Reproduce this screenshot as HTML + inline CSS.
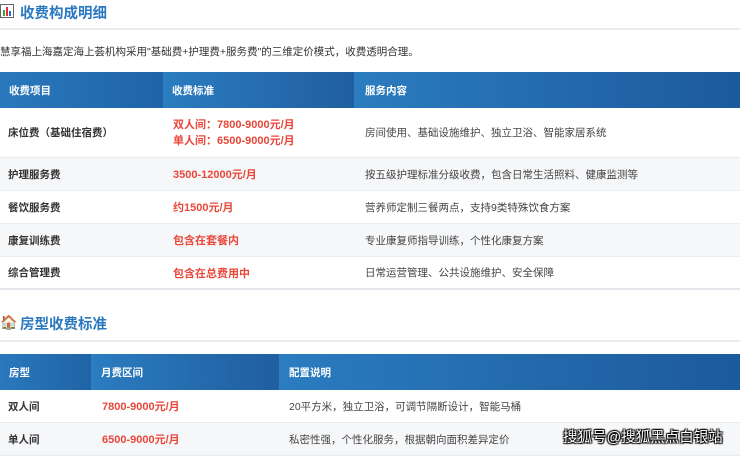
<!DOCTYPE html><html><head><meta charset="utf-8"><style>
*{margin:0;padding:0;box-sizing:border-box}
body{width:740px;height:452px;overflow:hidden;background:#fff;font-family:"Liberation Sans","Noto Sans CJK SC",sans-serif;position:relative;color:#333}
.a{position:absolute;white-space:nowrap}
.h2{font-size:14.5px;font-weight:bold;color:#2a78bf}
.hr{position:absolute;left:0;width:740px;height:2px;background:#e8ebef}
.hd{position:absolute;background:linear-gradient(90deg,#2a7abf,#1d5c9e);}
.hc{position:absolute;top:0;height:100%;color:#fff;font-weight:bold;font-size:10.5px;display:flex;align-items:center;padding-left:9px}
.row{position:absolute;left:0;width:740px;border-bottom:1px solid #e9ecf0;font-size:10.5px}
.row div{position:absolute;top:0;height:100%;display:flex;align-items:center}
.b{font-weight:bold;color:#333}
.r{font-weight:bold;color:#e8473a;font-size:11px}
.n{color:#444}
</style></head><body>
<div class="a" style="left:0;top:4px;width:14px;height:14px;border:1px solid #666;background:#fff">
 <div class="a" style="left:2px;bottom:1px;width:2px;height:6px;background:#3a3"></div>
 <div class="a" style="left:5px;bottom:1px;width:2px;height:9px;background:#d33"></div>
 <div class="a" style="left:8px;bottom:1px;width:2px;height:5px;background:#36c"></div>
</div>
<div class="a h2" style="left:20px;top:2px">收费构成明细</div>
<div class="hr" style="top:28px"></div>
<div class="a" style="left:0;top:44px;font-size:10.5px;color:#333">慧享福上海嘉定海上荟机构采用"基础费+护理费+服务费"的三维定价模式，收费透明合理。</div>

<div class="hd" style="left:0;top:72px;width:740px;height:36px">
 <div class="hc" style="left:0;width:163px;background:linear-gradient(90deg,#2a78bd,#1f64a6)">收费项目</div>
 <div class="hc" style="left:163px;width:191px;background:linear-gradient(90deg,#2b7cc0,#205fa0)">收费标准</div>
 <div class="hc" style="left:354px;width:386px;padding-left:11px;background:linear-gradient(90deg,#2b7cc0,#1c5a9c)">服务内容</div>
</div>
<div class="row" style="top:108px;height:50px"><div class="b" style="left:8px">床位费（基础住宿费）</div><div class="r" style="left:173px;line-height:16px;flex-direction:column;align-items:flex-start;justify-content:center">双人间：7800-9000元/月<br>单人间：6500-9000元/月</div><div class="n" style="left:365px">房间使用、基础设施维护、独立卫浴、智能家居系统</div></div>
<div class="row" style="top:158px;height:33px;background:#f6f7f9"><div class="b" style="left:8px">护理服务费</div><div class="r" style="left:173px">3500-12000元/月</div><div class="n" style="left:365px">按五级护理标准分级收费，包含日常生活照料、健康监测等</div></div>
<div class="row" style="top:191px;height:33px"><div class="b" style="left:8px">餐饮服务费</div><div class="r" style="left:173px">约1500元/月</div><div class="n" style="left:365px">营养师定制三餐两点，支持9类特殊饮食方案</div></div>
<div class="row" style="top:224px;height:33px;background:#f6f7f9"><div class="b" style="left:8px">康复训练费</div><div class="r" style="left:173px">包含在套餐内</div><div class="n" style="left:365px">专业康复师指导训练，个性化康复方案</div></div>
<div class="row" style="top:257px;height:33px;border-bottom:2px solid #e3e6ea"><div class="b" style="left:8px">综合管理费</div><div class="r" style="left:173px">包含在总费用中</div><div class="n" style="left:365px">日常运营管理、公共设施维护、安全保障</div></div>

<div class="a" style="left:0;top:314px;font-size:14px">🏠</div>
<div class="a h2" style="left:20px;top:313px">房型收费标准</div>
<div class="hr" style="top:340px"></div>
<div class="hd" style="left:0;top:354px;width:740px;height:36px">
 <div class="hc" style="left:0;width:91px;background:linear-gradient(90deg,#2a78bd,#1f64a6)">房型</div>
 <div class="hc" style="left:91px;width:188px;padding-left:10px;background:linear-gradient(90deg,#2b7cc0,#205fa0)">月费区间</div>
 <div class="hc" style="left:279px;width:461px;padding-left:10px;background:linear-gradient(90deg,#2b7cc0,#1c5a9c)">配置说明</div>
</div>
<div class="row" style="top:390px;height:33px"><div class="b" style="left:8px">双人间</div><div class="r" style="left:102px">7800-9000元/月</div><div class="n" style="left:289px">20平方米，独立卫浴，可调节隔断设计，智能马桶</div></div>
<div class="row" style="top:423px;height:33px;background:#f6f7f9"><div class="b" style="left:8px">单人间</div><div class="r" style="left:102px">6500-9000元/月</div><div class="n" style="left:289px">私密性强，个性化服务，根据朝向面积差异定价</div></div>
<div class="a" style="left:563px;top:426px;font-size:14.5px;color:#fff;text-shadow:0 0 1px #000,1px 1px 1px #000,-1px -1px 1px #000,1px -1px 1px #000,-1px 1px 1px #000">搜狐号@搜狐黑点白银站</div>
</body></html>
